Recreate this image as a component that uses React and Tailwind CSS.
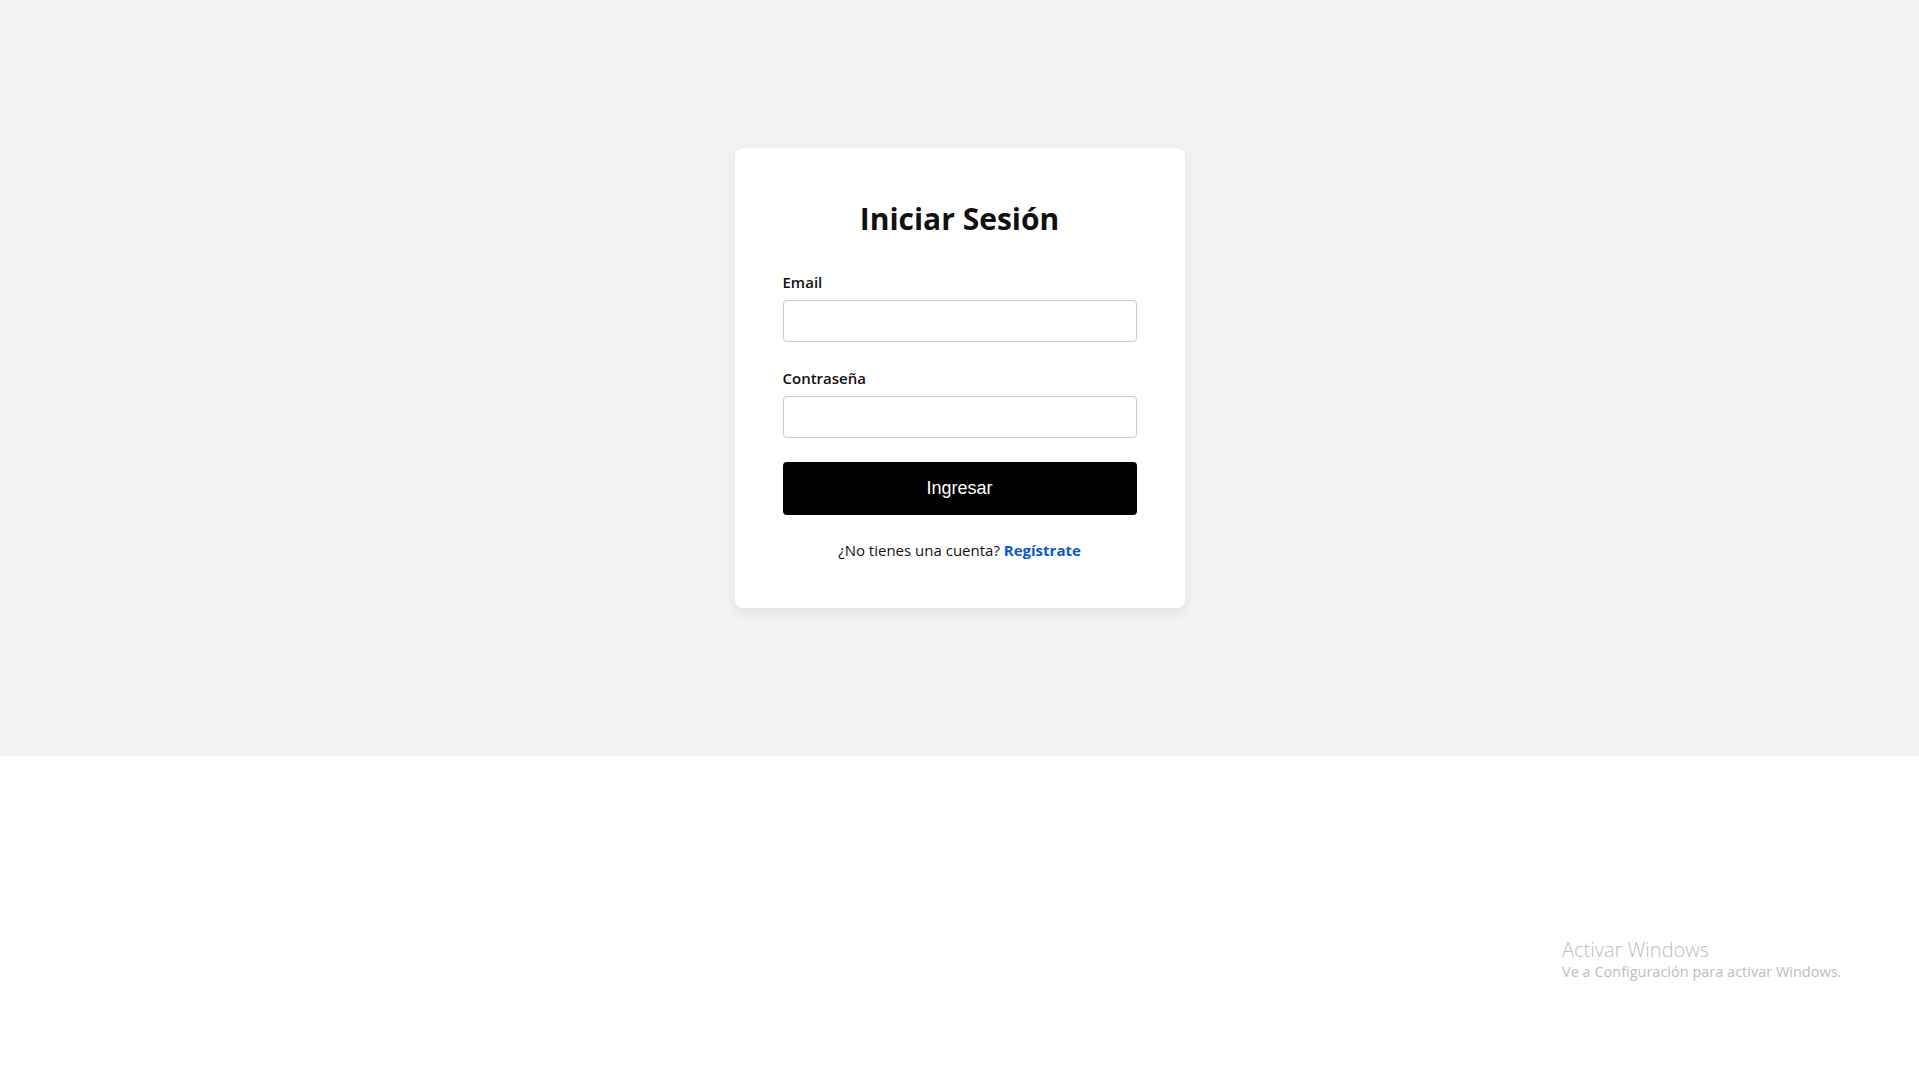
import React from "react";

export default function App() {
  return (
    <div className="relative min-h-screen bg-white" style={{ fontFamily: '"Open Sans", "Noto Sans", sans-serif' }}>
      <div className="h-[756px] bg-[#f3f3f3] flex items-center justify-center">
        <div className="w-[450px] bg-white rounded-lg shadow-[0_4px_14px_rgba(0,0,0,0.08)] px-12 pt-[51px] pb-12">
          <h1 className="text-[30px] font-bold text-center leading-[40px] text-[#111]">Iniciar Sesión</h1>
          <label className="block mt-[33px] text-[15px] font-semibold leading-[20px] text-[#111]">Email</label>
          <input type="email" className="mt-[8px] block w-full h-[42px] border border-[#c8c8c8] rounded-[4px] bg-white outline-none" />
          <label className="block mt-[26px] text-[15px] font-semibold leading-[20px] text-[#111]">Contraseña</label>
          <input type="password" className="mt-[8px] block w-full h-[42px] border border-[#c8c8c8] rounded-[4px] bg-white outline-none" />
          <button
            className="mt-[24px] block w-full h-[53px] bg-black text-white rounded-[4px] text-[18px]"
            style={{ fontFamily: '"Liberation Sans", Arial, sans-serif' }}
          >
            Ingresar
          </button>
          <p className="mt-[25px] text-center text-[15px] leading-[20px] text-[#111]">
            ¿No tienes una cuenta? <a href="#" className="font-bold text-[#0a58ca]">Regístrate</a>
          </p>
        </div>
      </div>
      <div className="absolute left-[1562px] top-[938px] text-[#bdbdbd] select-none">
        <div className="text-[20px] leading-[24px] font-light">Activar Windows</div>
        <div className="text-[14.5px] leading-[20px]">Ve a Configuración para activar Windows.</div>
      </div>
    </div>
  );
}
